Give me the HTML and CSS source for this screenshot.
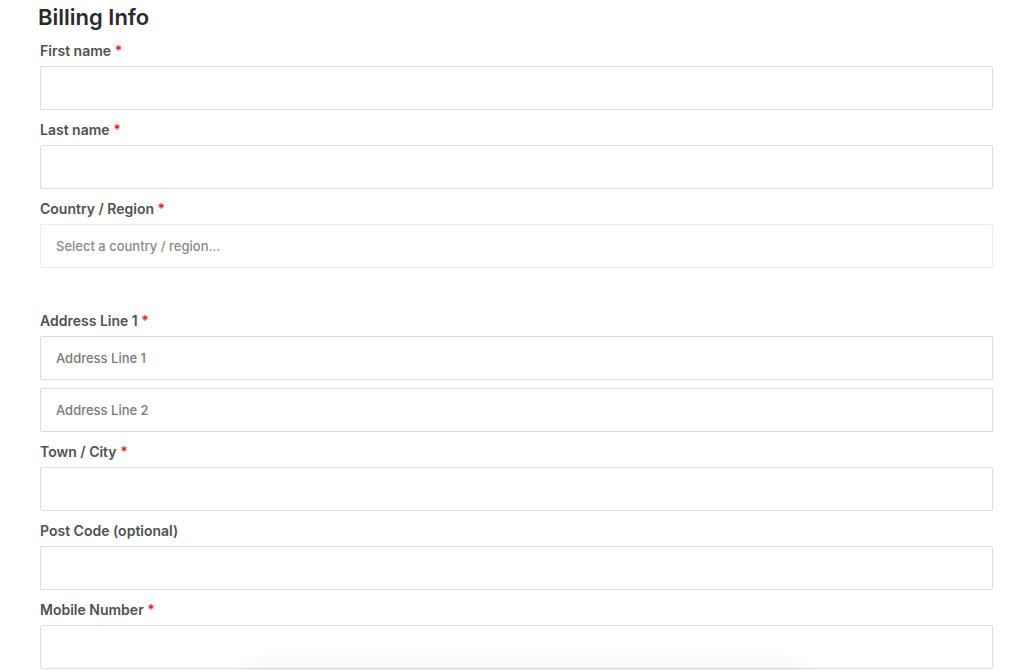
FILE: index.html
```html
<!DOCTYPE html>
<html lang="en">
<head>
    <meta charset="UTF-8">
    <meta name="viewport" content="width=device-width, initial-scale=1.0">
    <title>Billing Info</title>
    <link rel="stylesheet" href="styles.css">
</head>
<body>
    <form class="billing">
        <h2 class="billing-title">Billing Info</h2>

        <div class="field">
            <label for="firstName">First name <span class="req">*</span></label>
            <input type="text" id="firstName">
        </div>

        <div class="field">
            <label for="lastName">Last name <span class="req">*</span></label>
            <input type="text" id="lastName">
        </div>

        <div class="field">
            <label for="country">Country / Region <span class="req">*</span></label>
            <input type="text" id="country" class="select" placeholder="Select a country / region...">
        </div>

        <div class="field field-address">
            <label for="address1">Address Line 1 <span class="req">*</span></label>
            <input type="text" id="address1" placeholder="Address Line 1">
        </div>

        <div class="field">
            <input type="text" id="address2" placeholder="Address Line 2">
        </div>

        <div class="field">
            <label for="city">Town / City <span class="req">*</span></label>
            <input type="text" id="city">
        </div>

        <div class="field">
            <label for="postCode">Post Code (optional)</label>
            <input type="text" id="postCode">
        </div>

        <div class="field">
            <label for="mobile">Mobile Number <span class="req">*</span></label>
            <input type="text" id="mobile">
        </div>
    </form>

    <div class="floating-bar"></div>
</body>
</html>
```

FILE: styles.css
```css
body {
    margin: 0;
    padding: 0 31px 0 40px;
    font-family: Inter, "Liberation Sans", Arial, sans-serif;
    background-color: #fff;
    color: #555;
    overflow: hidden;
}
.billing {
    display: flex;
    flex-direction: column;
    gap: 8px;
}
.billing-title {
    margin: 4px 0 0 -2px;
    font-size: 22px;
    font-weight: 600;
    line-height: 27px;
    color: #2b2b2b;
}
.field {
    display: flex;
    flex-direction: column;
}
.field-address {
    margin-top: 33px;
}
.field label {
    font-size: 14px;
    font-weight: 600;
    line-height: 20px;
    padding-top: 2px;
    margin-bottom: 5px;
    color: #515151;
}
.req {
    color: #e2231a;
}
.field input {
    box-sizing: border-box;
    height: 44px;
    width: 100%;
    margin: 0;
    padding: 0 15px;
    border: 1px solid #dcdcdc;
    border-radius: 2px;
    background: #fff;
    font-family: inherit;
    font-size: 13px;
    font-weight: 500;
    color: #444;
    outline: none;
}
.field input.select {
    border-color: #ececec;
}
.field input::placeholder {
    color: #7a7a7a;
}
.field input.select::placeholder {
    color: #8a8a8a;
}
.floating-bar {
    position: fixed;
    left: 250px;
    width: 550px;
    top: 674px;
    height: 40px;
    border-radius: 8px;
    background: #fff;
    box-shadow: 0 0 24px 4px rgba(0, 0, 0, 0.07);
}
```
